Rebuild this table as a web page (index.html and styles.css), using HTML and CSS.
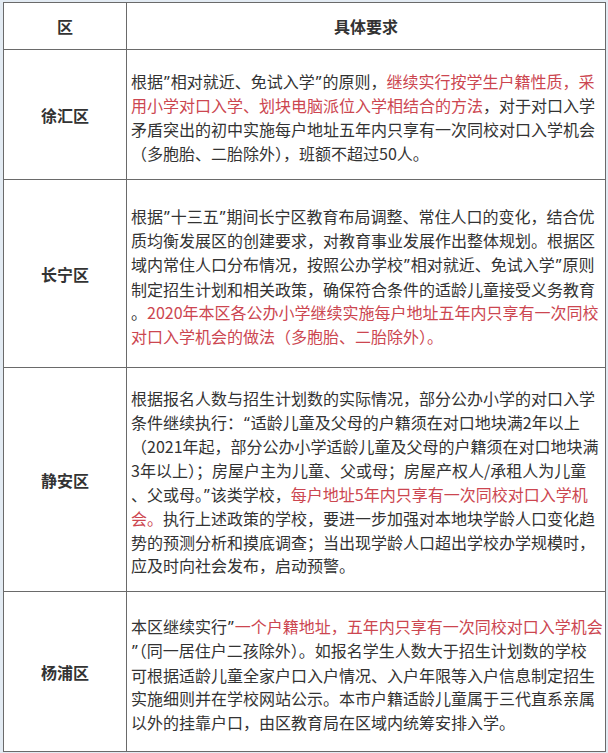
FILE: index.html
```html
<!DOCTYPE html>
<html lang="zh-CN">
<head>
<meta charset="utf-8">
<title>对口入学政策</title>
<link rel="stylesheet" href="styles.css">
</head>
<body>
<table class="policy">
  <colgroup>
    <col class="col-district">
    <col class="col-detail">
  </colgroup>
  <thead>
    <tr class="row-head">
      <th>区</th>
      <th>具体要求</th>
    </tr>
  </thead>
  <tbody>
    <tr class="row-xuhui">
      <td class="district">徐汇区</td>
      <td class="detail">
        <span class="ln">根据<span class="q">”</span>相对就近、免试入学<span class="q">”</span>的原则，<span class="red">继续实行按学生户籍性质，采</span></span>
        <span class="ln"><span class="red">用小学对口入学、划块电脑派位入学相结合的方法</span>，对于对口入学</span>
        <span class="ln">矛盾突出的初中实施每户地址五年内只享有一次同校对口入学机会</span>
        <span class="ln">（多胞胎、二胎除外），班额不超过50人。</span>
      </td>
    </tr>
    <tr class="row-changning">
      <td class="district">长宁区</td>
      <td class="detail">
        <span class="ln">根据<span class="q">”</span>十三五<span class="q">”</span>期间长宁区教育布局调整、常住人口的变化，结合优</span>
        <span class="ln">质均衡发展区的创建要求，对教育事业发展作出整体规划。根据区</span>
        <span class="ln">域内常住人口分布情况，按照公办学校<span class="q">”</span>相对就近、免试入学<span class="q">”</span>原则</span>
        <span class="ln">制定招生计划和相关政策，确保符合条件的适龄儿童接受义务教育</span>
        <span class="ln">。<span class="red">2020年本区各公办小学继续实施每户地址五年内只享有一次同校</span></span>
        <span class="ln"><span class="red">对口入学机会的做法（多胞胎、二胎除外）。</span></span>
      </td>
    </tr>
    <tr class="row-jingan">
      <td class="district">静安区</td>
      <td class="detail">
        <span class="ln">根据报名人数与招生计划数的实际情况，部分公办小学的对口入学</span>
        <span class="ln">条件继续执行：<span class="q">“</span>适龄儿童及父母的户籍须在对口地块满2年以上</span>
        <span class="ln">（2021年起，部分公办小学适龄儿童及父母的户籍须在对口地块满</span>
        <span class="ln">3年以上）；房屋户主为儿童、父或母；房屋产权人/承租人为儿童</span>
        <span class="ln">、父或母。<span class="q">”</span>该类学校，<span class="red">每户地址5年内只享有一次同校对口入学机</span></span>
        <span class="ln"><span class="red">会。</span>执行上述政策的学校，要进一步加强对本地块学龄人口变化趋</span>
        <span class="ln">势的预测分析和摸底调查；当出现学龄人口超出学校办学规模时，</span>
        <span class="ln">应及时向社会发布，启动预警。</span>
      </td>
    </tr>
    <tr class="row-yangpu">
      <td class="district">杨浦区</td>
      <td class="detail">
        <span class="ln">本区继续实行<span class="q">”</span><span class="red">一个户籍地址，五年内只享有一次同校对口入学机会</span></span>
        <span class="ln"><span class="q">”</span>（同一居住户二孩除外）。如报名学生人数大于招生计划数的学校</span>
        <span class="ln">可根据适龄儿童全家户口入户情况、入户年限等入户信息制定招生</span>
        <span class="ln">实施细则并在学校网站公示。本市户籍适龄儿童属于三代直系亲属</span>
        <span class="ln">以外的挂靠户口，由区教育局在区域内统筹安排入学。</span>
      </td>
    </tr>
  </tbody>
</table>
</body>
</html>
```
FILE: styles.css
```css
html, body {
  margin: 0;
  padding: 0;
}
body {
  background: #e3ebf3;
  font-family: "Noto Sans CJK SC", "Noto Sans", sans-serif;
  color: #333333;
  font-size: 16px;
}
.policy {
  margin: 2px 0 0 3px;
  width: 602px;
  border-collapse: collapse;
  table-layout: fixed;
  background: #ffffff;
}
.col-district { width: 123px; }
.col-detail { width: 479px; }
.policy th,
.policy td {
  border: 1px solid #6a6a6a;
  padding: 0;
}
.policy th {
  font-weight: bold;
  text-align: center;
  color: #333333;
  font-size: 16px;
}
.row-head { height: 47px; }
.row-xuhui { height: 130px; }
.row-changning { height: 188px; }
.row-jingan { height: 224px; }
.row-yangpu { height: 160px; }
.district {
  text-align: center;
  font-weight: bold;
  vertical-align: middle;
}
.detail {
  vertical-align: middle;
  padding: 6px 0 0 4px !important;
  line-height: 23.6px;
}
.ln {
  display: block;
  white-space: nowrap;
}
.q {
  font-family: "Noto Sans", "Liberation Sans", sans-serif;
  padding: 0 1px;
}
.red {
  color: #cc4650;
}
```
